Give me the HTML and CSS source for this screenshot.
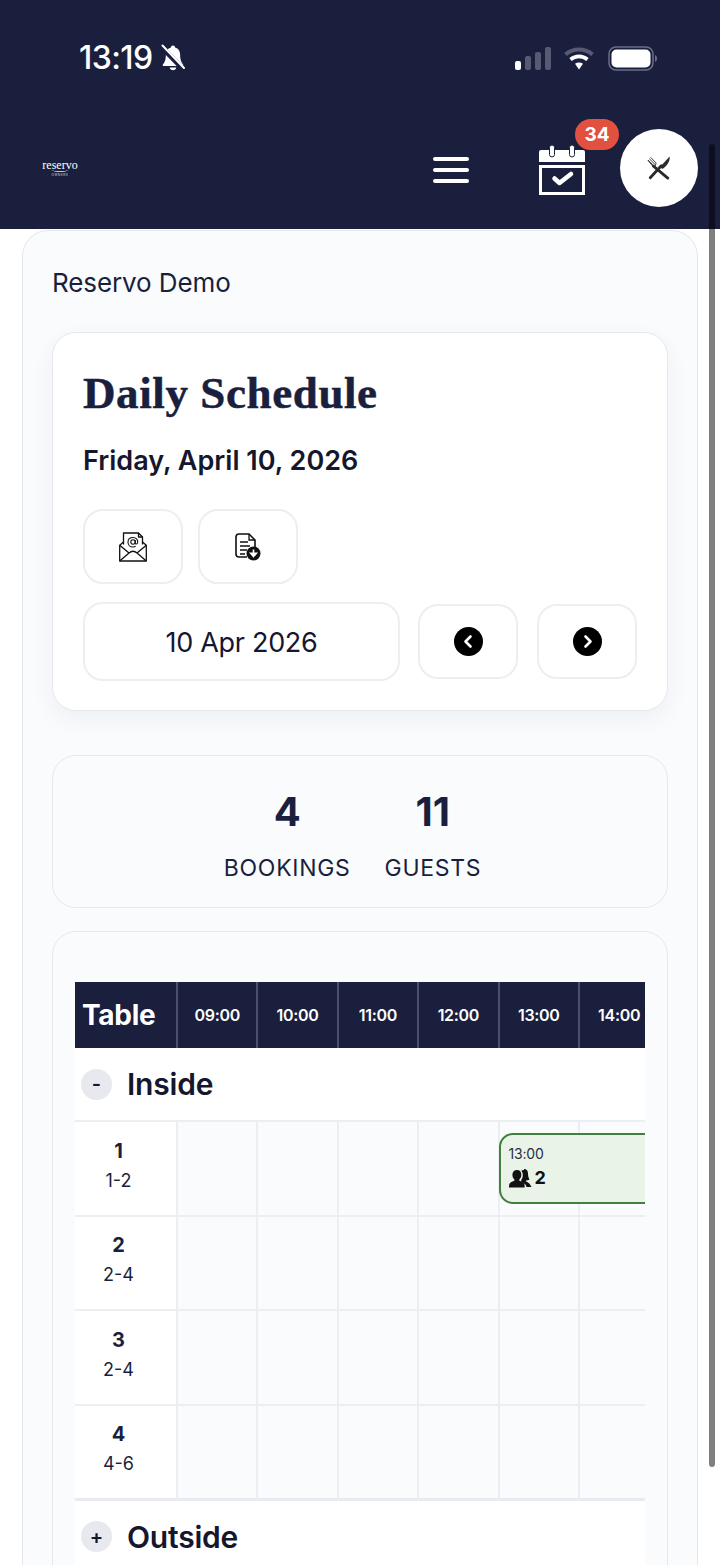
FILE: index.html
```html
<!DOCTYPE html>
<html lang="en">
<head>
<meta charset="utf-8">
<title>Daily Schedule</title>
<link rel="stylesheet" href="styles.css">
</head>
<body>
<div class="page">
  <header class="header">
    <div class="status">
      <span class="time">13:19</span>
      <svg class="bell" viewBox="0 0 24 28" width="24" height="28"><path fill="#fff" d="M12 1.500c1.300 0 2 .9 2.100 1.900 3.300.9 5 3.700 5 7 0 5 1.200 8 3 10.100.5.600.1 1.500-.7 1.500H2.600c-.8 0-1.200-.9-.7-1.500 1.800-2.100 3-5.100 3-10.100 0-3.300 1.700-6.100 5-7 .1-1 .8-1.900 2.100-1.900zM8.700 23.500h6.600c-.3 1.700-1.700 2.800-3.300 2.800s-3-1.100-3.300-2.800z"/><path stroke="#1a1f3d" stroke-width="5" d="M1 3.500 22 25"/><path stroke="#fff" stroke-width="2" stroke-linecap="round" d="M1.500 1.500 23 24"/></svg>
      <span class="status-gap"></span>
      <svg class="signal" viewBox="0 0 36 23" width="36" height="23"><rect x="0" y="14" width="6" height="9" rx="2" fill="#fff"/><rect x="10" y="9" width="6" height="14" rx="2" fill="#565a72"/><rect x="20" y="5" width="6" height="18" rx="2" fill="#565a72"/><rect x="30" y="0" width="6" height="23" rx="2" fill="#565a72"/></svg>
      <svg class="wifi" viewBox="0 0 30 23" width="30" height="23"><path d="M1.500 7.500C9 .8 21 .8 28.500 7.500" fill="none" stroke="#565a72" stroke-width="4"/><path d="M6.500 12.500c5-4.200 12-4.200 17 0" fill="none" stroke="#fff" stroke-width="3.600"/><path d="M11 16.800c2.400-1.800 5.600-1.800 8 0L15 22.500z" fill="#fff"/></svg>
      <svg class="battery" viewBox="0 0 49 25" width="49" height="25"><rect x="1" y="1" width="44" height="23" rx="7" fill="none" stroke="#6a6e85" stroke-width="1.500"/><rect x="3.500" y="3.500" width="39" height="18" rx="5" fill="#fff"/><path d="M47 9c1.300.4 2 1.800 2 3.500S48.300 15.600 47 16z" fill="#6a6e85"/></svg>
    </div>
    <nav class="nav">
      <div class="logo">
        <span class="logo-word">reservo</span>
        <svg class="logo-swoosh" viewBox="0 0 22 3" width="22" height="3"><path d="M1 .4C7 2.900 15 2.900 21 .4 15 3.800 7 3.800 1 .4z" fill="#fff"/></svg>
        <span class="logo-sub">OWNERS</span>
      </div>
      <div class="burger"><span></span><span></span><span></span></div>
      <div class="calendar">
        <svg viewBox="0 0 46 50" width="46" height="50"><path fill="#fff" d="M2 5h42a2 2 0 0 1 2 2v10H0V7a2 2 0 0 1 2-2z"/><rect x="10.500" y="0" width="5" height="12" rx="2.500" fill="#fff" stroke="#1a1f3d" stroke-width="1"/><rect x="30.500" y="0" width="5" height="12" rx="2.500" fill="#fff" stroke="#1a1f3d" stroke-width="1"/><path fill="none" stroke="#fff" stroke-width="3" d="M1.500 21.500h43v27h-43z"/><path fill="none" stroke="#fff" stroke-width="4.500" stroke-linecap="round" stroke-linejoin="round" d="M15.500 33.500l5 4.500L32 29"/></svg>
        <span class="badge">34</span>
      </div>
      <div class="fab">
        <svg viewBox="0 0 26 26" width="24" height="24"><path d="M24.500 .5C25.300 6 21 11.200 16.500 14L14.300 11.700z" fill="#2b2b2b"/><path d="M15.500 10.500 3.500 23.500" stroke="#2b2b2b" stroke-width="3" stroke-linecap="round"/><path d="M7 11 22.500 24" stroke="#2b2b2b" stroke-width="3" stroke-linecap="round"/><path d="M1 4.500 7.500 10.500M2.500 3 8.500 9M4 1.500 9.700 7.500M8.500 11.500 10 7.500M1 4.500 6.500 11.500" stroke="#2b2b2b" stroke-width="1" fill="none"/></svg>
      </div>
    </nav>
  </header>

  <main class="outer">
    <p class="venue">Reservo Demo</p>

    <section class="card schedule">
      <h1 class="title">Daily Schedule</h1>
      <p class="date">Friday, April 10, 2026</p>
      <div class="actions">
        <button class="btn btn-action" type="button">
          <svg viewBox="0 0 28 30" width="28" height="30"><g fill="none" stroke="#111" stroke-width="1.300" stroke-linejoin="round"><path d="M4.500 12.500V1h15l4 4v7.500"/><path d="M4.500 10 .7 13.200V29h26.600V13.200L23.500 10"/><path d="M.7 13.200 10 21 .7 29M27.300 13.200 18 21l9.300 8M10 21c2.500-2.200 5.500-2.200 8 0"/><path d="M19.500 1v4h4"/></g><circle cx="14" cy="10" r="2.200" fill="none" stroke="#111" stroke-width="1.100"/><path d="M16.200 8v3c0 1.500 2.200 1.500 2.500-.5.400-3-2-5-4.700-5-3 0-5 2-5 4.700s2 4.800 4.800 4.800c1.200 0 2-.2 2.800-.7" fill="none" stroke="#111" stroke-width="1.100"/></svg>
        </button>
        <button class="btn btn-action" type="button">
          <svg viewBox="0 0 26 28" width="26" height="28"><path d="M12 24H4a3 3 0 0 1-3-3V4a3 3 0 0 1 3-3h10l6 6v7" fill="none" stroke="#111" stroke-width="1.600"/><path d="M14 1v6h6" fill="none" stroke="#111" stroke-width="1.300"/><path d="M5 9h8M5 13h10M5 17h7M5 21h5" stroke="#111" stroke-width="1.300"/><circle cx="18.500" cy="20.500" r="7" fill="#111"/><path d="M18.500 16.500v6M15.700 20.300l2.800 3.200 2.800-3.200z" stroke="#fff" stroke-width="1.600" fill="#fff"/></svg>
        </button>
      </div>
      <div class="date-row">
        <div class="btn date-input">10 Apr 2026</div>
        <button class="btn btn-nav" type="button">
          <svg viewBox="0 0 29 29" width="29" height="29"><circle cx="14.500" cy="14.500" r="14.500" fill="#000"/><path d="M16.500 9.500l-5 5 5 5" fill="none" stroke="#fff" stroke-width="2.600" stroke-linecap="round" stroke-linejoin="round"/></svg>
        </button>
        <button class="btn btn-nav" type="button">
          <svg viewBox="0 0 29 29" width="29" height="29"><circle cx="14.500" cy="14.500" r="14.500" fill="#000"/><path d="M12.500 9.500l5 5-5 5" fill="none" stroke="#fff" stroke-width="2.600" stroke-linecap="round" stroke-linejoin="round"/></svg>
        </button>
      </div>
    </section>

    <section class="card stats">
      <div class="stat"><strong class="stat-num">4</strong><span class="stat-label">BOOKINGS</span></div>
      <div class="stat"><strong class="stat-num">11</strong><span class="stat-label">GUESTS</span></div>
    </section>

    <section class="card plan">
      <div class="plan-scroll">
        <div class="grid-row head">
          <div class="hcell hcell-first">Table</div>
          <div class="hcell">09:00</div><div class="hcell">10:00</div><div class="hcell">11:00</div><div class="hcell">12:00</div><div class="hcell">13:00</div><div class="hcell">14:00</div>
        </div>
        <div class="area area-open"><span class="toggle">-</span><span class="area-name">Inside</span></div>
        <div class="grid-row row">
          <div class="tcell"><b>1</b><span>1-2</span></div>
          <div class="cell"></div><div class="cell"></div><div class="cell"></div><div class="cell"></div>
          <div class="cell">
            <div class="booking">
              <span class="b-time">13:00</span>
              <span class="b-guests">
                <svg viewBox="0 0 23 20" width="23" height="20"><path fill="#111" d="M8 2c2.800 0 4.300 2 4.300 4.700 0 2-.7 3.700-2 4.800v1.300c1.800.7 4.300 1.500 5 3.200.3.800.4 2 .4 3.500H0c0-1.500.1-2.700.4-3.500.7-1.700 3.300-2.500 5-3.200v-1.300c-1.300-1.100-2-2.800-2-4.800C3.400 4 5.200 2 8 2z"/><path fill="#111" d="M15 1c2.800 0 4 2 4 4.500 0 2.500.7 4.500 1.500 6-1 .6-2.300.9-3.500 1v1c1.800.7 3.500 1.300 5.500 5.500h-5c-.3-2-1.500-3.400-5.300-5v-2c1-1.300 1.600-3 1.600-5 0-1.800-.6-3.300-1.600-4.300.6-.5 1.500-.7 2.800-.7z"/></svg>
                <b>2</b>
              </span>
            </div>
          </div>
          <div class="cell"></div>
        </div>
        <div class="grid-row row">
          <div class="tcell"><b>2</b><span>2-4</span></div>
          <div class="cell"></div><div class="cell"></div><div class="cell"></div><div class="cell"></div><div class="cell"></div><div class="cell"></div>
        </div>
        <div class="grid-row row">
          <div class="tcell"><b>3</b><span>2-4</span></div>
          <div class="cell"></div><div class="cell"></div><div class="cell"></div><div class="cell"></div><div class="cell"></div><div class="cell"></div>
        </div>
        <div class="grid-row row row-last">
          <div class="tcell"><b>4</b><span>4-6</span></div>
          <div class="cell"></div><div class="cell"></div><div class="cell"></div><div class="cell"></div><div class="cell"></div><div class="cell"></div>
        </div>
        <div class="area"><span class="toggle">+</span><span class="area-name">Outside</span></div>
      </div>
    </section>
  </main>

  <div class="scrollbar"></div>
</div>
</body>
</html>
```

FILE: styles.css
```css
* { box-sizing: border-box; }
html, body { margin: 0; padding: 0; height: 1565px; overflow: hidden; }
body { font-family: Inter, "Liberation Sans", sans-serif; color: #1a1f3d; background: #fff; }
.page { position: relative; width: 720px; height: 1565px; overflow: hidden; }

.header { height: 229px; background: #1a1f3d; }
.status { height: 116px; display: flex; align-items: center; padding: 0 63px 0 79px; color: #fff; }
.time { font-size: 32px; font-weight: 500; letter-spacing: -0.6px; line-height: 1; }
.bell { margin-left: 8px; }
.status-gap { flex: 1; }
.wifi { margin-left: 13px; }
.battery { margin-left: 14px; }

.nav { margin-top: 13px; height: 78px; display: flex; align-items: center; padding: 0 22px 0 42px; }
.logo { width: 36px; margin-top: 4px; display: flex; flex-direction: column; align-items: center; color: #fff; }
.logo-word { font-family: "Liberation Serif", serif; font-size: 12px; line-height: 9px; }
.logo-swoosh { margin-top: -1px; }
.logo-sub { font-size: 3px; letter-spacing: 0.6px; line-height: 7px; opacity: .8; }
.burger { margin-left: 355px; width: 36px; display: flex; flex-direction: column; gap: 7.500px; margin-top: 4px; }
.burger span { display: block; height: 3.500px; border-radius: 2px; background: #fff; }
.calendar { position: relative; margin-left: 70px; width: 46px; height: 50px; margin-top: 4px; }
.calendar svg { display: block; }
.badge { position: absolute; left: 36px; top: -26px; width: 44px; height: 31px; border-radius: 16px; background: #e2503f; color: #fff; font-size: 19px; font-weight: 700; display: flex; align-items: center; justify-content: center; }
.fab { margin-left: 35px; width: 78px; height: 78px; border-radius: 50%; background: #fff; display: flex; align-items: center; justify-content: center; }

.outer { margin: 1px 22px 0; height: 1400px; padding: 0 29px; background: #f9fbfd; border: 1px solid #e5e7eb; border-radius: 26px; }
.venue { margin: 0; padding-top: 36px; font-size: 26px; line-height: 32px; letter-spacing: -0.1px; color: #1a1f3d; height: 101px; }

.card { border: 1px solid #e6e8ec; border-radius: 24px; }
.schedule { background: #fff; height: 379px; padding: 0 29px 0 30px; box-shadow: 0 8px 24px rgba(26,31,61,.05); }
.title { margin: 0; padding-top: 35px; font-family: "Liberation Serif", serif; font-weight: 700; font-size: 45px; line-height: 50px; letter-spacing: 0.6px; -webkit-text-stroke: 0.5px #1a1f3d; color: #1a1f3d; }
.date { margin: 0; padding-top: 26px; font-size: 27px; font-weight: 600; line-height: 34px; letter-spacing: 0; color: #14172e; }
.actions { display: flex; gap: 15px; margin-top: 31px; }
.btn { background: #fff; border: 2px solid #eceef1; border-radius: 20px; padding: 0; display: flex; align-items: center; justify-content: center; }
.btn-action { width: 100px; height: 75px; }
.date-row { display: flex; align-items: center; margin-top: 18px; }
.date-input { width: 317px; height: 79px; padding-top: 2px; font-size: 27px; color: #14172e; letter-spacing: -0.3px; }
.btn-nav { width: 100px; height: 75px; margin-left: 18px; }
.btn-nav + .btn-nav { margin-left: 19px; }

.stats { margin-top: 44px; height: 153px; display: flex; justify-content: center; gap: 34px; padding-right: 15px; background: #f9fbfd; }
.stat { display: flex; flex-direction: column; align-items: center; }
.stat-num { font-size: 40px; font-weight: 700; line-height: 48px; margin-top: 32px; color: #1a1f3d; }
.stat-label { font-size: 23px; line-height: 28px; margin-top: 18px; letter-spacing: 0.7px; color: #1a1f3d; }

.plan { margin-top: 23px; height: 700px; padding: 50px 22px 0; background: #f9fbfd; }
.plan-scroll { width: 570px; overflow: hidden; }
.grid-row { display: grid; grid-template-columns: 103px repeat(6, 80.400px); width: 585.400px; }
.head { height: 66px; background: #1a1f3d; color: #fff; }
.hcell { font-size: 16px; font-weight: 600; letter-spacing: -0.3px; display: flex; align-items: center; justify-content: center; border-right: 2px solid #4a4f6b; }
.hcell-first { font-size: 28px; font-weight: 700; justify-content: flex-start; padding-left: 7px; letter-spacing: -0.3px; }
.area { height: 72px; background: #fff; display: flex; align-items: center; padding-left: 6px; gap: 15px; }
.area-open { border-bottom: 2px solid #eceef1; height: 74px; }
.toggle { width: 31px; height: 31px; border-radius: 50%; background: #e8e9ee; color: #14172e; font-size: 20px; font-weight: 600; display: flex; align-items: center; justify-content: center; }
.area-name { font-size: 30px; font-weight: 600; color: #14172e; letter-spacing: -0.2px; }
.row { height: 94.500px; }
.tcell { background: #fff; border-right: 2px solid #eceef1; border-bottom: 2px solid #eceef1; display: flex; flex-direction: column; align-items: center; justify-content: center; gap: 4px; font-size: 18px; line-height: 26px; color: #1a1f3d; padding: 0 14px 5px 0; }
.tcell b { font-size: 20px; font-weight: 700; }
.cell { position: relative; background: #f9fbfd; border-right: 2px solid #eceef1; border-bottom: 2px solid #eceef1; }
.row-last { height: 95px; }
.row-last .tcell, .row-last .cell { border-bottom: 3px solid #e8eaf1; }
.booking { position: absolute; left: -1px; top: 11px; width: 240px; height: 71px; background: #eaf3e8; border: 2px solid #41803f; border-radius: 14px; padding: 10px 8px; display: flex; flex-direction: column; gap: 5px; z-index: 1; }
.b-time { font-size: 14px; line-height: 17px; color: #2a2d3e; letter-spacing: -0.2px; }
.b-guests { display: flex; align-items: center; gap: 3px; font-size: 18px; line-height: 22px; color: #111; }
.b-guests b { font-weight: 700; }

.scrollbar { position: absolute; left: 709px; top: 144px; width: 6px; height: 1323px; border-radius: 3px; background: rgba(0,0,0,.5); }
```
